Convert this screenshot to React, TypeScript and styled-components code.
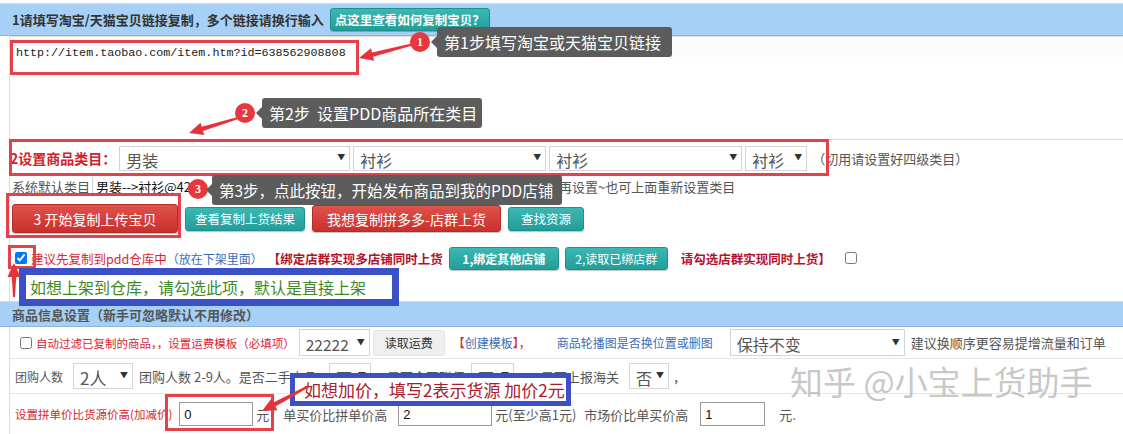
import styled, { createGlobalStyle } from "styled-components";

const GlobalStyle = createGlobalStyle`
  html, body {
    margin: 0;
    padding: 0;
    background: #fff;
  }
  body {
    font-family: "Noto Sans CJK SC", "Liberation Sans", sans-serif;
  }
`;

const Page = styled.div`
  position: relative;
  width: 1123px;
  height: 434px;
  overflow: hidden;
  font-size: 13px;
  color: #333;
  padding-top: 3px;
  box-sizing: border-box;
`;

const HeaderBar = styled.div<{ $h?: number }>`
  display: flex;
  align-items: center;
  gap: 6px;
  height: ${(p) => p.$h ?? 31}px;
  padding-left: 12px;
  background: #a6d0f5;
  border-top: 1px solid #c4dff0;
  border-bottom: 1px solid #8fb5d2;
`;

const HeaderTitle = styled.span<{ $muted?: boolean }>`
  font-size: 13px;
  font-weight: 700;
  color: ${(p) => (p.$muted ? "#555" : "#333")};
  white-space: nowrap;
`;

const Body = styled.div`
  margin-left: 9px;
  border-left: 1px solid #ddd;
`;

const LinkArea = styled.div`
  height: 104px;
  box-sizing: border-box;
  padding: 9px 6px;
  border-top: 1px solid #e4ddcf;
  border-bottom: 1px solid #d8d8d8;
  background: linear-gradient(#fafafd, #fff 30px);
  font-family: "Liberation Mono", monospace;
  font-size: 11.7px;
  color: #222;
`;

const Row = styled.div<{ $h: number; $gap?: number; $line?: boolean; $pl?: number }>`
  display: flex;
  align-items: center;
  gap: ${(p) => p.$gap ?? 4}px;
  height: ${(p) => p.$h}px;
  padding-left: ${(p) => p.$pl ?? 0}px;
  box-sizing: border-box;
  white-space: nowrap;
  border-bottom: ${(p) => (p.$line ? "1px solid #e6e6e6" : "none")};
`;

const Text = styled.span<{ $c?: string; $fs?: number; $b?: boolean; $ml?: number }>`
  color: ${(p) => p.$c ?? "#444"};
  font-size: ${(p) => p.$fs ?? 13}px;
  font-weight: ${(p) => (p.$b ? 700 : 400)};
  margin-left: ${(p) => p.$ml ?? 0}px;
  white-space: nowrap;
`;

const DefaultValue = styled.span`
  width: 300px;
  color: #111;
  font-size: 13px;
  padding-left: 3px;
  margin-left: 2px;
  border-left: 1px solid #ccc;
`;

const NoteBox = styled.span`
  width: 163px;
  height: 19px;
  box-sizing: border-box;
  border: 1px solid #ccc;
  overflow: hidden;
  color: #555;
  font-size: 13px;
  line-height: 17px;
  padding-left: 4px;
`;

const SelectBox = styled.div<{ $w: number; $fs?: number; $h?: number; $ml?: number }>`
  display: flex;
  align-items: center;
  justify-content: space-between;
  width: ${(p) => p.$w}px;
  height: ${(p) => p.$h ?? 25}px;
  margin-left: ${(p) => p.$ml ?? 0}px;
  box-sizing: border-box;
  padding: 3px 4px 0 6px;
  border: 1px solid #d4d4d4;
  background: #fff;
  font-size: ${(p) => p.$fs ?? 16}px;
  color: #555;
  overflow: hidden;

  &::after {
    content: "▼";
    font-size: 8px;
    color: #333;
    margin-top: -6px;
    margin-left: 2px;
  }
`;

const Btn = styled.button<{ $v: "red" | "teal" | "grey"; $w: number; $h?: number; $fs?: number; $b?: boolean; $ml?: number }>`
  width: ${(p) => p.$w}px;
  height: ${(p) => p.$h ?? 24}px;
  margin-left: ${(p) => p.$ml ?? 0}px;
  padding: 0;
  border-radius: 3px;
  font-family: inherit;
  font-size: ${(p) => p.$fs ?? 12.5}px;
  font-weight: ${(p) => (p.$b ? 700 : 400)};
  white-space: nowrap;
  cursor: pointer;
  color: ${(p) => (p.$v === "grey" ? "#333" : "#fff")};
  border: 1px solid
    ${(p) => (p.$v === "red" ? "#b52b27" : p.$v === "teal" ? "#1f8f8c" : "#e4e4e4")};
  background: ${(p) =>
    p.$v === "red"
      ? "linear-gradient(#e0524c, #c9302c)"
      : p.$v === "teal"
      ? "linear-gradient(#3bb8b3, #229e9a)"
      : "#efefef"};
  box-shadow: ${(p) => (p.$v === "grey" ? "none" : "0 1px 1px rgba(0,0,0,0.25)")};
`;

const Check = styled.input<{ $ml?: number }>`
  width: 12px;
  height: 12px;
  margin: 0 4px 0 ${(p) => p.$ml ?? 0}px;
`;

const NumInput = styled.input<{ $w: number; $ml: number }>`
  width: ${(p) => p.$w}px;
  height: 24px;
  margin-left: ${(p) => p.$ml}px;
  box-sizing: border-box;
  border: 1px solid #999;
  padding: 0 4px;
  font-family: "Liberation Sans", sans-serif;
  font-size: 13px;
  color: #111;
`;

const Spacer = styled.div<{ $h: number }>`
  height: ${(p) => p.$h}px;
`;

/* ---------- annotation layer ---------- */

const Mark = styled.div<{ $x: number; $y: number; $w: number; $h: number; $c?: string; $bw?: number; $fill?: string }>`
  position: absolute;
  left: ${(p) => p.$x}px;
  top: ${(p) => p.$y}px;
  width: ${(p) => p.$w}px;
  height: ${(p) => p.$h}px;
  box-sizing: border-box;
  border: ${(p) => p.$bw ?? 3}px solid ${(p) => p.$c ?? "#e5414a"};
  background: ${(p) => p.$fill ?? "transparent"};
  display: flex;
  align-items: center;
  overflow: hidden;
`;

const MarkText = styled.span<{ $c: string; $fs: number; $pl: number }>`
  color: ${(p) => p.$c};
  font-size: ${(p) => p.$fs}px;
  padding-left: ${(p) => p.$pl}px;
  white-space: nowrap;
`;

const Badge = styled.div<{ $x: number; $y: number }>`
  position: absolute;
  left: ${(p) => p.$x - 10}px;
  top: ${(p) => p.$y - 10}px;
  width: 20px;
  height: 20px;
  border-radius: 50%;
  background: #e8383f;
  color: #fff;
  font-family: "Liberation Serif", serif;
  font-weight: 700;
  font-size: 12px;
  display: flex;
  align-items: center;
  justify-content: center;
`;

const Tip = styled.div<{ $x: number; $y: number; $w: number; $fs?: number }>`
  position: absolute;
  left: ${(p) => p.$x}px;
  top: ${(p) => p.$y}px;
  width: ${(p) => p.$w}px;
  height: 30px;
  box-sizing: border-box;
  padding-left: 7px;
  border-radius: 3px;
  background: #5c5c5c;
  color: #fff;
  font-size: ${(p) => p.$fs ?? 16}px;
  display: flex;
  align-items: center;
  white-space: nowrap;

  &::before {
    content: "";
    position: absolute;
    left: -6px;
    top: 9px;
    border-style: solid;
    border-width: 6px 6px 6px 0;
    border-color: transparent #5c5c5c transparent transparent;
  }
`;

const Watermark = styled.div`
  position: absolute;
  left: 790px;
  top: 357px;
  font-size: 33px;
  color: rgba(175, 175, 175, 0.7);
  white-space: nowrap;
`;

const ArrowLayer = styled.svg`
  position: absolute;
  left: 0;
  top: 0;
  pointer-events: none;
`;

function arrowShape(x1: number, y1: number, x2: number, y2: number) {
  const dx = x2 - x1;
  const dy = y2 - y1;
  const len = Math.hypot(dx, dy);
  const ux = dx / len;
  const uy = dy / len;
  const px = -uy;
  const py = ux;
  const head = 14;
  const bx = x2 - ux * head;
  const by = y2 - uy * head;
  const pt = (x: number, y: number) => `${x.toFixed(1)},${y.toFixed(1)}`;
  return [
    pt(x1 + px * 1, y1 + py * 1),
    pt(bx + px * 2.2, by + py * 2.2),
    pt(bx + px * 6.5, by + py * 6.5),
    pt(x2, y2),
    pt(bx - px * 6.5, by - py * 6.5),
    pt(bx - px * 2.2, by - py * 2.2),
    pt(x1 - px * 1, y1 - py * 1),
  ].join(" ");
}

const arrows = [
  [414, 44, 359, 58],
  [238, 118, 189, 133],
  [14, 297, 14, 263],
  [309, 386, 262, 411],
];

export default function App() {
  return (
    <Page>
      <GlobalStyle />
      <HeaderBar>
        <HeaderTitle>1请填写淘宝/天猫宝贝链接复制，多个链接请换行输入</HeaderTitle>
        <Btn $v="teal" $w={160} $h={23} $fs={12.5} $b>
          点这里查看如何复制宝贝？
        </Btn>
      </HeaderBar>

      <Body>
        <LinkArea>http://item.taobao.com/item.htm?id=638562908808</LinkArea>

        <Row $h={36} $gap={3}>
          <Text $c="#d3202b" $b $fs={14}>
            2设置商品类目：
          </Text>
          <SelectBox $w={231}>男装</SelectBox>
          <SelectBox $w={193}>衬衫</SelectBox>
          <SelectBox $w={193}>衬衫</SelectBox>
          <SelectBox $w={62}>衬衫</SelectBox>
          <Text $c="#555" $ml={2}>
            （切用请设置好四级类目）
          </Text>
        </Row>

        <Row $h={21} $gap={0} $pl={2}>
          <Text $c="#555">系统默认类目</Text>
          <DefaultValue>男装--&gt;衬衫@42</DefaultValue>
          <NoteBox>这个类目不正确可以点击</NoteBox>
          <Text $c="#555">再设置~也可上面重新设置类目</Text>
        </Row>

        <Row $h={43} $gap={7} $pl={2}>
          <Btn $v="red" $w={166} $h={29} $fs={14}>
            3 开始复制上传宝贝
          </Btn>
          <Btn $v="teal" $w={120} $h={24}>
            查看复制上货结果
          </Btn>
          <Btn $v="red" $w={189} $h={27} $fs={14}>
            我想复制拼多多-店群上货
          </Btn>
          <Btn $v="teal" $w={76} $h={24}>
            查找资源
          </Btn>
        </Row>

        <Row $h={36} $gap={0} $pl={5}>
          <Check type="checkbox" defaultChecked />
          <Text $c="#d8262f" $fs={12.5}>
            建议先复制到pdd仓库中
          </Text>
          <Text $c="#3d6db3" $fs={12}>
            （放在下架里面）
          </Text>
          <Text $c="#b3122c" $b $fs={12.5} $ml={5}>
            【绑定店群实现多店铺同时上货
          </Text>
          <Btn $v="teal" $w={110} $h={23} $fs={12} $b $ml={6}>
            1,绑定其他店铺
          </Btn>
          <Btn $v="teal" $w={103} $h={23} $fs={12} $ml={6}>
            2,读取已绑店群
          </Btn>
          <Text $c="#b3122c" $b $fs={12.5} $ml={13}>
            请勾选店群实现同时上货】
          </Text>
          <Check type="checkbox" $ml={14} />
        </Row>
        <Spacer $h={25} />
      </Body>

      <HeaderBar $h={24}>
        <HeaderTitle $muted>商品信息设置（新手可忽略默认不用修改）</HeaderTitle>
      </HeaderBar>

      <Body>
        <Row $h={32} $gap={0} $pl={10} $line>
          <Check type="checkbox" />
          <Text $c="#d8262f" $fs={11.5}>
            自动过滤已复制的商品，，设置运费模板（必填项）
          </Text>
          <SelectBox $w={71} $h={27} $fs={15.5} $ml={4}>
            22222
          </SelectBox>
          <Btn $v="grey" $w={72} $h={26} $fs={12} $ml={3}>
            读取运费
          </Btn>
          <Text $c="#d8262f" $fs={12} $ml={8}>
            【<Text $c="#3d6db3" $fs={12}>创建模板</Text>】，
          </Text>
          <Text $c="#3d6db3" $fs={12} $ml={26}>
            商品轮播图是否换位置或删图
          </Text>
          <SelectBox $w={175} $h={27} $fs={16} $ml={17}>
            保持不变
          </SelectBox>
          <Text $c="#555" $ml={6}>
            建议换顺序更容易提增流量和订单
          </Text>
        </Row>

        <Row $h={35} $gap={0} $pl={5} $line>
          <Text $c="#555" $fs={12}>
            团购人数
          </Text>
          <SelectBox $w={60} $h={26} $fs={17} $ml={10}>
            2人
          </SelectBox>
          <Text $c="#555" $ml={6}>
            团购人数 2-9人。是否二手商品
          </Text>
          <SelectBox $w={42} $h={26} $fs={16} $ml={12}>
            否
          </SelectBox>
          <Text $c="#555" $ml={3}>
            ，是否全国联保
          </Text>
          <SelectBox $w={43} $h={26} $fs={16} $ml={6}>
            否
          </SelectBox>
          <Text $c="#555" $ml={14}>
            ，是否上报海关
          </Text>
          <SelectBox $w={40} $h={26} $fs={16} $ml={10}>
            否
          </SelectBox>
          <Text $c="#555" $ml={4}>
            ，
          </Text>
        </Row>

        <Row $h={40} $gap={0} $pl={5}>
          <Text $c="#d8262f" $fs={11.5}>
            设置拼单价比货源价高(加减价)
          </Text>
          <NumInput $w={74} $ml={7} defaultValue="0" />
          <Text $c="#555" $ml={3}>
            元
          </Text>
          <Text $c="#555" $ml={14}>
            单买价比拼单价高
          </Text>
          <NumInput $w={94} $ml={11} defaultValue="2" />
          <Text $c="#555" $ml={3}>
            元(至少高1元)
          </Text>
          <Text $c="#555" $ml={8}>
            市场价比单买价高
          </Text>
          <NumInput $w={65} $ml={12} defaultValue="1" />
          <Text $c="#555" $ml={14}>
            元.
          </Text>
        </Row>
      </Body>

      <Watermark>知乎 @小宝上货助手</Watermark>

      <Mark $x={10} $y={40} $w={349} $h={35} />
      <Mark $x={9} $y={139} $w={820} $h={37} />
      <Mark $x={6} $y={193} $w={175} $h={45} />
      <Mark $x={8} $y={245} $w={28} $h={24} />
      <Mark $x={165} $y={394} $w={109} $h={37} />
      <Mark $x={19} $y={268} $w={380} $h={38} $c="#3b4fc6" $bw={7} $fill="#fff">
        <MarkText $c="#3f8a26" $fs={16} $pl={4}>
          如想上架到仓库，请勾选此项，默认是直接上架
        </MarkText>
      </Mark>
      <Mark $x={290} $y={373} $w={281} $h={33} $c="#3b4fc6" $bw={5} $fill="#fff">
        <MarkText $c="#a8202d" $fs={17} $pl={9}>
          如想加价，填写2表示货源 加价2元
        </MarkText>
      </Mark>

      <ArrowLayer width={1123} height={434}>
        {arrows.map(([a, b, c, d], i) => (
          <polygon key={i} points={arrowShape(a, b, c, d)} fill="#e5333b" />
        ))}
      </ArrowLayer>

      <Badge $x={420} $y={42}>1</Badge>
      <Tip $x={437} $y={27} $w={235}>第1步填写淘宝或天猫宝贝链接</Tip>
      <Badge $x={245} $y={113}>2</Badge>
      <Tip $x={262} $y={98} $w={220}>第2步&nbsp;&nbsp;设置PDD商品所在类目</Tip>
      <Badge $x={198} $y={189}>3</Badge>
      <Tip $x={212} $y={175} $w={350} $fs={15.5}>
        第3步，点此按钮，开始发布商品到我的PDD店铺
      </Tip>
    </Page>
  );
}
